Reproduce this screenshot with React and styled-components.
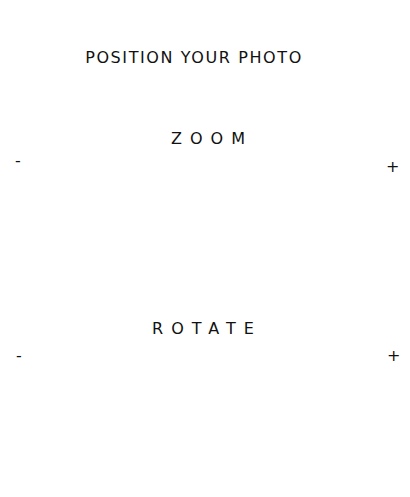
import React from "react";
import styled, { createGlobalStyle } from "styled-components";

const Global = createGlobalStyle`
  html, body { margin: 0; padding: 0; background: #fff; }
  body { font-family: "DejaVu Sans", Verdana, sans-serif; color: #111; }
`;

const Page = styled.div`
  width: 410px;
  height: 497px;
  display: flex;
  flex-direction: column;
`;

const Title = styled.h1`
  margin: 48px 0 0;
  font-size: 16px;
  font-weight: 400;
  line-height: 20px;
  letter-spacing: 1.6px;
  text-align: center;
  padding-right: 22px;
`;

const Section = styled.section`
  display: flex;
  flex-direction: column;
  margin-top: ${(p) => p.$top}px;
`;

const Label = styled.div`
  font-size: 16px;
  line-height: 20px;
  letter-spacing: 8px;
  text-align: center;
  padding-left: ${(p) => p.$shift}px;
`;

const Row = styled.div`
  display: flex;
  justify-content: space-between;
  align-items: flex-start;
  padding: 0 ${(p) => p.$right}px 0 ${(p) => p.$left}px;
  margin-top: ${(p) => p.$gap}px;
  height: 30px;
  font-size: 16px;
  line-height: 20px;
`;

const Sign = styled.span`
  display: block;
  margin-top: ${(p) => p.$drop || 0}px;
`;

export default function App() {
  return (
    <Page>
      <Global />
      <Title>POSITION YOUR PHOTO</Title>
      <Section $top={61}>
        <Label $shift={14}>ZOOM</Label>
        <Row $left={15} $right={10.6} $gap={1}>
          <Sign $drop={1}>-</Sign>
          <Sign $drop={7}>+</Sign>
        </Row>
      </Section>
      <Section $top={139}>
        <Label $shift={4}>ROTATE</Label>
        <Row $left={16} $right={9.6} $gap={7}>
          <Sign>-</Sign>
          <Sign>+</Sign>
        </Row>
      </Section>
    </Page>
  );
}
